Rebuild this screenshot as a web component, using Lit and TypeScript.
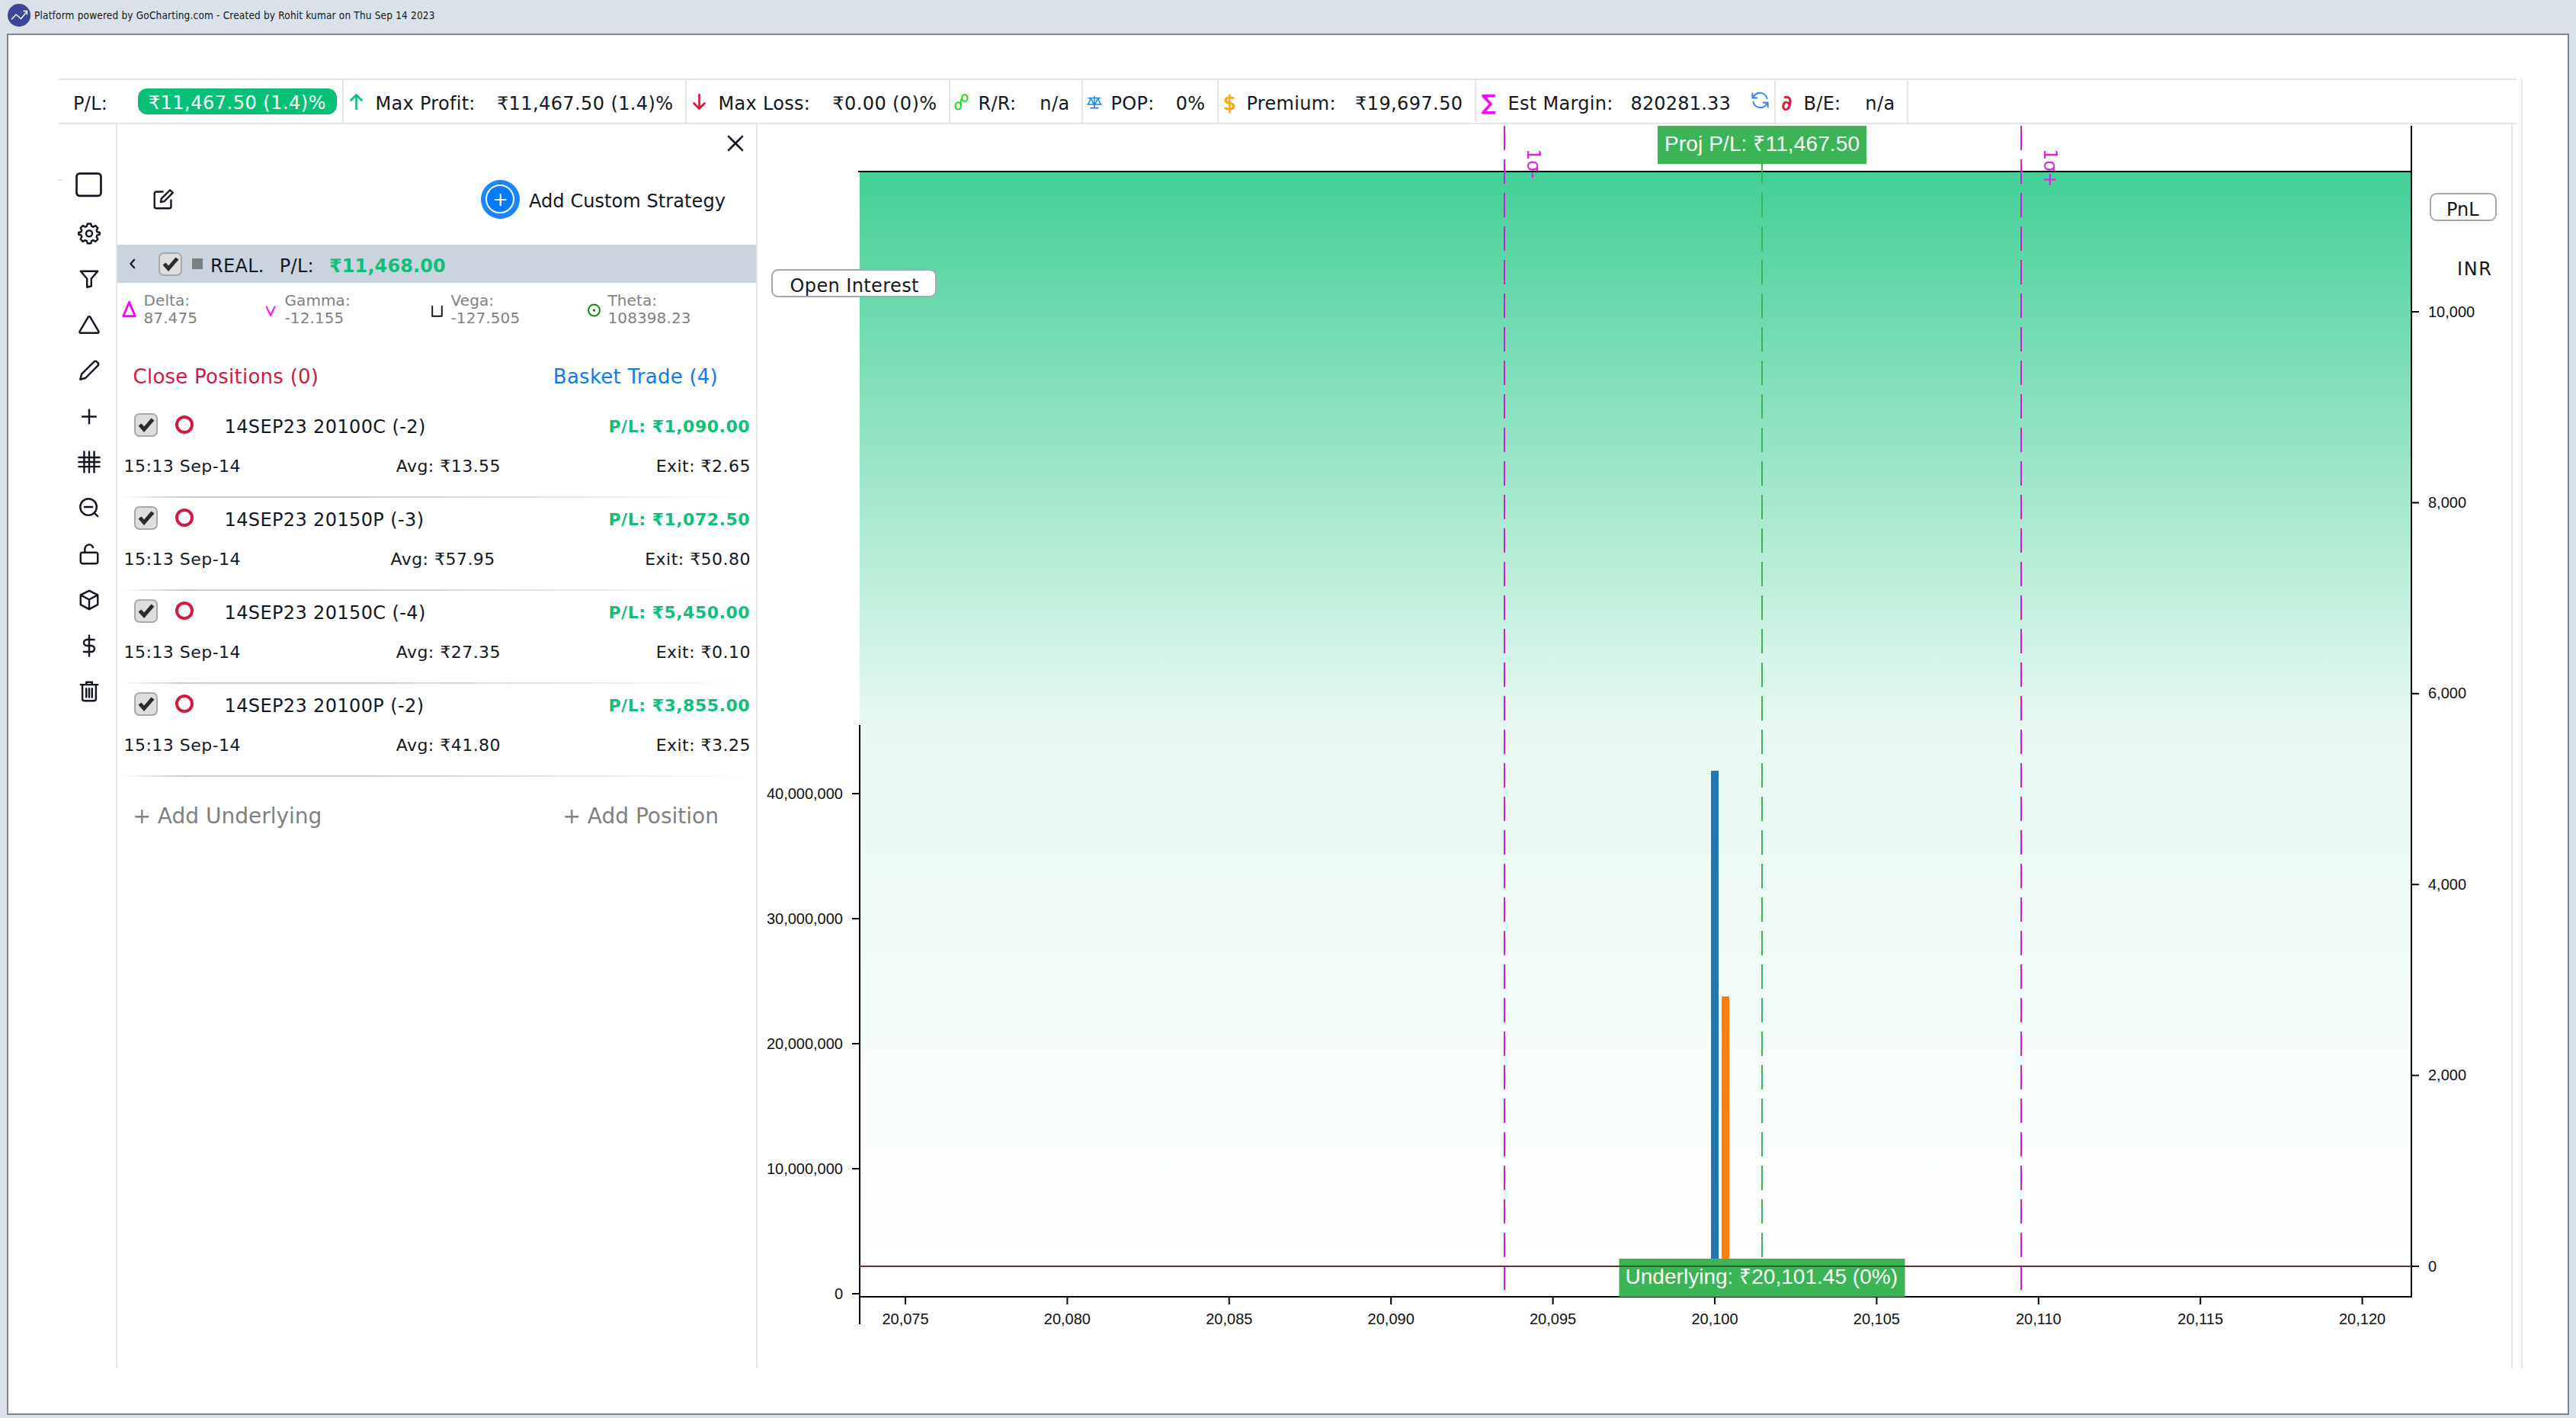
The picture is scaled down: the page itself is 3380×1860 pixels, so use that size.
import { css, html, LitElement, svg } from "lit";
import { customElement, property } from "lit/decorators.js";

// Stroke icons, all on a 32x32 grid
const icons = {
    square: svg`<rect x="0.5" y="1.5" width="31" height="28.5" rx="4" />`,
    gear: svg`
        <path d="M13.6 2.6h4.8l.9 3.5 2.3 1 3.2-1.8 3.3 3.3-1.8 3.2 1 2.3 3.4.8v2.9l-3.4.9-1 2.3 1.8 3.2-3.3 3.3-3.2-1.8-2.3 1-.9 3.4h-4.8l-.9-3.4-2.3-1-3.2 1.8-3.3-3.3 1.8-3.2-1-2.3-3.4-.9v-2.9l3.4-.8 1-2.3-1.8-3.2 3.3-3.3 3.2 1.8 2.3-1z" />
        <circle cx="16" cy="16.3" r="4.3" />`,
    filter: svg`<path d="M4 5h24l-9 10.5V26l-6 1.5v-12z" />`,
    triangle: svg`<path d="M14.6 5.2L2.8 25.1c-.6 1.2.1 2.4 1.4 2.4h23.6c1.3 0 2-1.2 1.4-2.4L17.4 5.2c-.7-1.1-2.1-1.1-2.8 0z" />`,
    pencil: svg`<path d="M3.5 28.5l1.9-7.5L22.5 4.1a3.200 3.200 0 0 1 4.500 0l.9.9a3.200 3.200 0 0 1 0 4.500L11 26.400z" />`,
    plus: svg`<path d="M16 7v19M6.5 16.5h19" />`,
    hash: svg`<path d="M9 1.5v29M16 1.5v29M23 1.5v29M1.5 9.5h29M1.5 16h29M1.5 22.5h29" />`,
    zoomOut: svg`<circle cx="15" cy="15" r="11.5" /><path d="M9.5 15h11M23.5 23.5l4.500 4.500" />`,
    lock: svg`<rect x="4" y="13.5" width="24" height="15.5" rx="2.5" /><path d="M10 13.5V9.5a6 6.500 0 0 1 11.500-3" />`,
    cube: svg`<path d="M16 3l12 6v13.5L16 29 4 22.5V9zM4 9l12 6.5L28 9M16 15.5V29" />`,
    dollar: svg`<path d="M16 1.5v29M23 7.5H12.8a4.200 4.200 0 0 0 0 8.500h6.400a4.200 4.200 0 0 1 0 8.500H8.500" />`,
    trash: svg`<path d="M4 6.5h24M12 6V3h8v3M6.5 7.5v19a2.500 2.500 0 0 0 2.500 2.500h14a2.500 2.500 0 0 0 2.500-2.500v-19M12 12v12M16 12v12M20 12v12" />`,
    edit: svg`<path d="M15 5H5.5A2.500 2.500 0 0 0 3 7.500v19A2.500 2.500 0 0 0 5.500 29h19a2.500 2.500 0 0 0 2.500-2.500V17M12 20l1-5L25.500 2.500l4 4L17 19z" />`,
    close: svg`<path d="M7 7l18 18M25 7l-18 18" />`,
    back: svg`<path d="M18.5 10l-5.5 6 5.5 6" />`,
    up: svg`<path d="M16 26V8M9 14.5l7-7 7 7" />`,
    down: svg`<path d="M16 7v18M9 18.5l7 7 7-7" />`,
    link: svg`<ellipse cx="11.2" cy="22.5" rx="4" ry="5" /><ellipse cx="20.8" cy="11" rx="4" ry="5" /><path d="M15.2 22v-7.500l1.600-2" />`,
    scales: svg`<path d="M8 11h17M16.500 8.500v17M11 25.500h11M11.500 11.500L7.500 20M11.500 11.500l4 8.500M21.500 11.500l-4 8.500M21.500 11.500l4 8.500M6.500 20.500h8.500M18 20.500h8.500" />`,
    refresh: svg`<path d="M27.5 13A12 11.500 0 0 0 6 8.500L3 11.500M3 4.500v7.500h7.500M4.500 19A12 11.500 0 0 0 26 23.500l3-3M29 27.500V20h-7.500" />`,
    delta: svg`<path d="M15 6.500L7 25.500h16z" />`,
    gamma: svg`<path d="M10 13l5.500 11.500M21 13l-5.500 11.500" />`,
    vega: svg`<path d="M9.500 12v13.500h13V12" />`,
    theta: svg`<circle cx="16" cy="17.500" r="7.700" /><circle cx="16" cy="17.500" r=".8" />`,
};

@customElement("oc-icon")
export class IconElement extends LitElement {
    @property({ type: String })
    name = "square";

    render() {
        return html`<svg viewBox="0 0 32 32">${icons[this.name]}</svg>`;
    }

    static styles = css`
        :host {
            display: block;
            flex: none;
            width: 32px;
            height: 32px;
        }

        svg {
            display: block;
            width: 100%;
            height: 100%;
            overflow: visible;
            fill: none;
            stroke: currentColor;
            stroke-width: var(--stroke, 2.6);
            stroke-linecap: round;
            stroke-linejoin: round;
        }
    `;
}

@customElement("oc-checkbox")
export class CheckboxElement extends LitElement {
    render() {
        return html`
            <svg width="31" height="31" viewBox="0 0 31 31">
                <rect x="1" y="1" width="29" height="29" rx="6" fill="#dedede" stroke="#a9a9a9" stroke-width="2" />
                <path d="M5.500 16.500l4-3 3.500 4 9.500-11 4 3L13 25z" fill="#2b2b2b" />
            </svg>
        `;
    }

    static styles = css`
        :host {
            display: block;
            flex: none;
            width: 31px;
            height: 31px;
        }

        svg {
            display: block;
        }
    `;
}

@customElement("oc-stats")
export class StatsElement extends LitElement {
    @property({ type: Array })
    stats = [
        { label: "P/L:", value: "₹11,467.50 (1.4)%", pill: true },
        { icon: "up", tone: "green", label: "Max Profit:", value: "₹11,467.50 (1.4)%" },
        { icon: "down", tone: "red", label: "Max Loss:", value: "₹0.00 (0)%" },
        { icon: "link", tone: "lime", label: "R/R:", value: "n/a", slim: true },
        { icon: "scales", tone: "blue", label: "POP:", value: "0%", slim: true },
        { glyph: "$", tone: "orange", label: "Premium:", value: "₹19,697.50", slim: true },
        { glyph: "∑", tone: "magenta", label: "Est Margin:", value: "820281.33", refresh: true },
        { glyph: "∂", tone: "red", label: "B/E:", value: "n/a", slim: true },
    ];

    renderMark(stat) {
        if (stat.icon) {
            return html`<oc-icon class="mark ${stat.slim ? "slim" : ""} ${stat.tone}" name=${stat.icon}></oc-icon>`;
        }
        if (stat.glyph) {
            return html`<span class="mark glyph ${stat.slim ? "slim" : ""} ${stat.tone}">${stat.glyph}</span>`;
        }
        return html`<span class="blank"></span>`;
    }

    render() {
        return html`
            ${this.stats.map(stat => html`
                <div class="stat ${stat.refresh ? "tight" : ""}">
                    ${this.renderMark(stat)}
                    <span class="label">${stat.label}</span>
                    <span class="value ${stat.pill ? "pill" : ""}">${stat.value}</span>
                    ${stat.refresh ? html`<oc-icon class="refresh" name="refresh"></oc-icon>` : ""}
                </div>
            `)}
        `;
    }

    static styles = css`
        :host {
            display: grid;
            grid-template-columns: 374px 450px 346px 174px 178px 338px 393px 174px;
            width: 3225px;
            height: 60px;
            box-sizing: border-box;
            border-top: 2px solid #e5e5e5;
            border-bottom: 2px solid #e5e5e5;
        }

        .stat {
            display: flex;
            align-items: center;
            box-sizing: border-box;
            padding-right: 15.5px;
            border-right: 2px solid #e5e5e5;
        }

        .tight {
            padding-right: 4px;
        }

        .stat:first-child {
            padding-right: 7px;
        }

        .label,
        .value {
            padding-top: 5px;
            letter-spacing: 0.3px;
            white-space: nowrap;
        }

        .value {
            margin-left: auto;
            letter-spacing: 0.4px;
        }

        .tight .value {
            letter-spacing: 0.2px;
        }

        .pill {
            height: 34px;
            box-sizing: border-box;
            padding: 5px 14px 0 14px;
            border-radius: 12px;
            background: #05c077;
            color: #fff;
            line-height: 29px;
            letter-spacing: 0.5px;
        }

        .blank {
            width: 19px;
        }

        .mark {
            flex: none;
            width: 33px;
            margin-right: 8.5px;
            text-align: center;
            --stroke: 2.6;
        }

        .slim {
            width: 29px;
            margin-right: 7.5px;
        }

        .mark.slim {
            --stroke: 1.7;
        }

        .mark.lime {
            --stroke: 2.2;
        }

        .glyph {
            padding-top: 4px;
            font-size: 27px;
            line-height: 28px;
            -webkit-text-stroke: 0.8px currentColor;
        }

        .refresh {
            width: 29px;
            height: 25px;
            margin: 0 0 4px 24px;
            color: #3c86e8;
        }

        .green { color: #05c077; }
        .red { color: #dc143c; }
        .lime { color: #12e212; }
        .blue { color: #1e86f0; }
        .orange { color: #ffa500; }
        .magenta { color: #f0f; }
    `;
}

@customElement("oc-positions")
export class PositionsElement extends LitElement {
    @property({ type: Array })
    positions = [
        { name: "14SEP23 20100C (-2)", pl: "₹1,090.00", avg: "₹13.55", exit: "₹2.65" },
        { name: "14SEP23 20150P (-3)", pl: "₹1,072.50", avg: "₹57.95", exit: "₹50.80" },
        { name: "14SEP23 20150C (-4)", pl: "₹5,450.00", avg: "₹27.35", exit: "₹0.10" },
        { name: "14SEP23 20100P (-2)", pl: "₹3,855.00", avg: "₹41.80", exit: "₹3.25" },
    ];

    @property({ type: Array })
    greeks = [
        { icon: "delta", label: "Delta:", value: "87.475" },
        { icon: "gamma", label: "Gamma:", value: "-12.155" },
        { icon: "vega", label: "Vega:", value: "-127.505" },
        { icon: "theta", label: "Theta:", value: "108398.23" },
    ];

    renderPosition(position) {
        return html`
            <div class="position">
                <div class="head">
                    <oc-checkbox></oc-checkbox>
                    <span class="ring"></span>
                    <span class="name">${position.name}</span>
                    <span class="pl">P/L: ${position.pl}</span>
                </div>
                <div class="detail">
                    <span>15:13 Sep-14</span>
                    <span>Avg: ${position.avg}</span>
                    <span>Exit: ${position.exit}</span>
                </div>
                <div class="divider"></div>
            </div>
        `;
    }

    render() {
        return html`
            <div class="close"><oc-icon name="close"></oc-icon></div>
            <div class="tools">
                <oc-icon name="edit"></oc-icon>
                <span class="add"><span class="add-inner">+</span></span>
                <span class="add-label">Add Custom Strategy</span>
            </div>
            <div class="strategy">
                <oc-icon name="back"></oc-icon>
                <oc-checkbox></oc-checkbox>
                <span class="swatch"></span>
                <span class="text real">REAL.</span>
                <span class="text">P/L:</span>
                <span class="text total">₹11,468.00</span>
            </div>
            <div class="greeks">
                ${this.greeks.map(greek => html`
                    <div class="greek">
                        <oc-icon class=${greek.icon} name=${greek.icon}></oc-icon>
                        <div>${greek.label}<br>${greek.value}</div>
                    </div>
                `)}
            </div>
            <div class="links">
                <span class="red">Close Positions (0)</span>
                <span class="blue">Basket Trade (4)</span>
            </div>
            ${this.positions.map(position => this.renderPosition(position))}
            <div class="footer">
                <span>+ Add Underlying</span>
                <span>+ Add Position</span>
            </div>
        `;
    }

    static styles = css`
        :host {
            display: flex;
            flex-direction: column;
            width: 840px;
            box-sizing: border-box;
            border-right: 2px solid #e5e5e5;
            white-space: nowrap;
        }

        .close {
            display: flex;
            justify-content: flex-end;
            align-items: center;
            height: 50px;
            padding-right: 11px;
        }

        .tools {
            display: flex;
            align-items: center;
            height: 96px;
            padding: 0 40px 0 45.5px;
        }

        .tools oc-icon {
            width: 29px;
            height: 29px;
        }

        .add {
            display: grid;
            place-items: center;
            width: 51px;
            height: 51px;
            margin: 0 12px 0 auto;
            border-radius: 50%;
            background: #1c86ff;
        }

        .add-inner {
            width: 34px;
            height: 34px;
            border: 2.5px solid #fff;
            border-radius: 50%;
            background: #0579ff;
            color: #fff;
            font-size: 24px;
            line-height: 37px;
            text-align: center;
        }

        .add-label {
            padding-top: 5px;
            letter-spacing: 0.08px;
        }

        .strategy {
            display: flex;
            align-items: center;
            height: 50px;
            margin-top: 12px;
            background: #cad4df;
        }

        .strategy oc-icon {
            margin: 0 20px 0 6px;
            width: 28px;
            height: 32px;
        }

        .swatch {
            width: 14px;
            height: 14px;
            margin-left: 13px;
            background: #7b7f7f;
        }

        .text {
            padding-top: 5px;
            margin-left: 20px;
            letter-spacing: 0.3px;
        }

        .real {
            margin-left: 10px;
        }

        .total {
            color: #0fbf7a;
            font-weight: 700;
            letter-spacing: 0.1px;
        }

        .greeks {
            display: grid;
            grid-template-columns: 185px 218px 206px 1fr;
            height: 91px;
            padding: 12px 0 0 2px;
            color: #808080;
            font-size: 20px;
            line-height: 22.5px;
            letter-spacing: 0.1px;
        }

        .greek {
            display: flex;
            align-items: flex-start;
        }

        .greek oc-icon {
            width: 31px;
            height: 31px;
            margin: 7px 2.5px 0 -1px;
        }

        .delta { color: #f0f; --stroke: 3; }
        .gamma { color: #f0f; --stroke: 2; }
        .vega { color: #131722; --stroke: 2; }
        .theta { color: #0a8a0a; --stroke: 2; }

        .links {
            display: flex;
            justify-content: space-between;
            margin-bottom: 18px;
            padding: 0 50px 0 20.5px;
            font-size: 26px;
            line-height: 40px;
            letter-spacing: 0.25px;
        }

        .red { color: #d2193f; }
        .blue { color: #0a7bf0; }

        .position {
            height: 122px;
        }

        .head {
            display: flex;
            align-items: center;
            height: 50px;
            padding: 0 8px 0 21.5px;
        }

        .ring {
            width: 16px;
            height: 16px;
            margin-left: 23.5px;
            border: 4px solid #d2193f;
            border-radius: 50%;
        }

        .name {
            margin-left: 40.5px;
            padding-top: 5px;
            letter-spacing: 0.38px;
        }

        .pl {
            margin-left: auto;
            padding-top: 5px;
            color: #0fbf7a;
            font-size: 22px;
            font-weight: 700;
            letter-spacing: 0.5px;
        }

        .detail {
            display: flex;
            justify-content: space-between;
            padding: 0 7px 0 8.5px;
            font-size: 22px;
            line-height: 60px;
            letter-spacing: 0.48px;
        }

        .divider {
            height: 2px;
            margin: 9px 4px 0;
            background: linear-gradient(90deg, #fff, #cacaca 10%, #cfcfcf 40%, #fff);
        }

        .footer {
            display: flex;
            justify-content: space-between;
            padding: 0 49px 0 20.5px;
            color: #808080;
            font-size: 28px;
            line-height: 102px;
        }
    `;
}

@customElement("oc-chart")
export class ChartElement extends LitElement {
    // Canvas coordinates of the plot area
    left = 1128;
    right = 3164;
    top = 225;
    zero = 1661;
    bottom = 1701;

    strikes = [20075, 20080, 20085, 20090, 20095, 20100, 20105, 20110, 20115, 20120];
    interest = [0, 10000000, 20000000, 30000000, 40000000];
    pnl = [0, 2000, 4000, 6000, 8000, 10000];

    format(n) {
        return n.toLocaleString("en-US");
    }

    renderStrike(strike) {
        const x = 1188 + (strike - 20075) * 42.48;
        return svg`
            <line x1=${x} x2=${x} y1="1702" y2="1711" />
            <text class="tick" x=${x} y="1737" text-anchor="middle">${this.format(strike)}</text>
        `;
    }

    renderInterest(value) {
        const y = 1697 - value / 10000000 * 164;
        return svg`
            <line x1="1118" x2=${this.left} y1=${y} y2=${y} />
            <text class="tick" x="1106" y=${y + 6.5} text-anchor="end">${this.format(value)}</text>
        `;
    }

    renderPnl(value) {
        const y = this.zero - value / 2000 * 250.4;
        return svg`
            <line x1=${this.right} x2="3174" y1=${y} y2=${y} />
            <text class="tick" x="3186" y=${y + 6.5}>${this.format(value)}</text>
        `;
    }

    renderSigma(x, label) {
        return svg`
            <line class="sigma" x1=${x} x2=${x} y1="165" y2="1692" />
            <text class="sigma-label" transform="translate(${x + 29.5} 195) rotate(90)">${label}</text>
        `;
    }

    render() {
        return html`
            <svg viewBox="994 163 2301 1632" width="2301" height="1632">
                <defs>
                    <linearGradient id="profit" x1="0" y1="0" x2="0" y2="1">
                        <stop offset="0" stop-color="#05c075" stop-opacity="0.75" />
                        <stop offset="0.5" stop-color="#05c075" stop-opacity="0.1" />
                        <stop offset="1" stop-color="#05c075" stop-opacity="0" />
                    </linearGradient>
                </defs>
                <rect x=${this.left} y=${this.top} width=${this.right - this.left} height=${this.zero - this.top} fill="url(#profit)" />
                <rect x="2245" y="1011" width="10" height="686" fill="#1f77b4" />
                <rect x="2259" y="1307" width="10" height="390" fill="#ff7f0e" />
                <g class="axis">
                    <line x1="1126" x2=${this.right} y1=${this.top} y2=${this.top} />
                    <line x1=${this.left} x2=${this.left} y1="951" y2="1737" />
                    <line x1=${this.right} x2=${this.right} y1="165" y2="1702" />
                    <line x1=${this.left} x2=${this.right} y1=${this.bottom} y2=${this.bottom} />
                    ${this.strikes.map(strike => this.renderStrike(strike))}
                    ${this.interest.map(value => this.renderInterest(value))}
                    ${this.pnl.map(value => this.renderPnl(value))}
                </g>
                ${this.renderSigma(1974, "1σ-")}
                ${this.renderSigma(2652, "1σ+")}
                <line class="spot" x1="2312" x2="2312" y1="165" y2="1652" />
                <rect class="badge" x="2175" y="165" width="274" height="50" />
                <text class="badge-text" x="2184" y="198" textLength="256">Proj P/L: ₹11,467.50</text>
                <rect class="badge" x="2124.5" y="1651" width="375" height="50" />
                <text class="badge-text" x="2132.5" y="1684" textLength="357.5">Underlying: ₹20,101.45 (0%)</text>
                <line class="zero" x1="1127" x2=${this.right} y1=${this.zero} y2=${this.zero} />
                <line class="zero-on-badge" x1="2124.5" x2="2499.5" y1=${this.zero} y2=${this.zero} />
                <rect class="button" x="1013" y="354" width="215" height="35" rx="8" />
                <text class="button-text" x="1036.5" y="382.5" textLength="169">Open Interest</text>
                <rect class="button" x="3189" y="254" width="86" height="35" rx="8" />
                <text class="button-text" x="3210" y="282.5">PnL</text>
                <text class="button-text" x="3224" y="360.5" textLength="45">INR</text>
            </svg>
        `;
    }

    static styles = css`
        :host {
            display: block;
            border-right: 2px solid #e5e5e5;
        }

        svg {
            display: block;
        }

        .axis line {
            stroke: #000;
            stroke-width: 2;
        }

        .tick {
            fill: #111;
            font: 20px "Liberation Sans", Arial, sans-serif;
        }

        .sigma {
            stroke: #d41bd4;
            stroke-width: 2;
            stroke-dasharray: 32 12;
        }

        .sigma-label {
            fill: #e61be6;
            font-size: 24px;
        }

        .spot {
            stroke: #3cb454;
            stroke-width: 2;
            stroke-dasharray: 32 12;
        }

        .badge {
            fill: #3ab455;
        }

        .badge-text {
            fill: #fff;
            font: 28px "Liberation Sans", Arial, sans-serif;
        }

        .zero {
            stroke: #722f37;
            stroke-width: 2;
        }

        .zero-on-badge {
            stroke: #28602f;
            stroke-width: 2;
        }

        .button {
            fill: #fff;
            stroke: #a4a9b0;
            stroke-width: 2;
        }

        .button-text {
            fill: #131722;
            font-size: 24px;
        }
    `;
}

@customElement("app-root")
export class AppRoot extends LitElement {
    tools = ["square", "gear", "filter", "triangle", "pencil", "plus", "hash", "zoomOut", "lock", "cube", "dollar", "trash"];

    render() {
        return html`
            <header class="header">
                <svg class="logo" viewBox="0 0 30 30">
                    <circle cx="15" cy="15" r="15" fill="#3b4599" />
                    <path d="M5 20.5l6-6.5 6.5 5.5 8-9.5M20.5 9.5h5v5" fill="none" stroke="#fff" stroke-width="1.4" />
                </svg>
                <span class="credit">Platform powered by GoCharting.com - Created by Rohit kumar on Thu Sep 14 2023</span>
            </header>
            <div class="frame">
                <div class="window">
                    <oc-stats></oc-stats>
                    <div class="body">
                        <nav class="rail">
                            ${this.tools.map(name => html`<div class="tool"><oc-icon name=${name}></oc-icon></div>`)}
                        </nav>
                        <oc-positions></oc-positions>
                        <oc-chart></oc-chart>
                    </div>
                </div>
            </div>
        `;
    }

    static styles = css`
        :host {
            display: flex;
            flex-direction: column;
            width: 3380px;
            height: 1860px;
            overflow: hidden;
            background: #dae1e8;
            color: #131722;
            font-family: "DejaVu Sans", Verdana, sans-serif;
            font-size: 24px;
            line-height: 28px;
        }

        .header {
            display: flex;
            align-items: center;
            gap: 5px;
            height: 40px;
            padding: 0 10px 4px;
        }

        .logo {
            width: 30px;
            height: 30px;
        }

        .credit {
            font-family: "DejaVu Sans Condensed", "DejaVu Sans", sans-serif;
            font-stretch: condensed;
            font-size: 13.5px;
            line-height: 20px;
            letter-spacing: 0.18px;
            color: #131722;
        }

        .frame {
            flex: 1;
            margin: 0 9px 4px;
            padding: 57px 0 0 66px;
            border: 2px solid #7f858b;
            background: #fff;
        }

        .window {
            display: flex;
            flex-direction: column;
            width: 3233px;
            height: 1692px;
            box-sizing: border-box;
            border-right: 2px solid #e5e5e5;
        }

        .body {
            display: flex;
            flex: 1;
        }

        .rail {
            position: relative;
            width: 77px;
            box-sizing: border-box;
            padding-top: 50px;
            border-right: 2px solid #e5e5e5;
        }

        /* resize handle on the outer edge */
        .rail::before {
            content: "";
            position: absolute;
            top: 72px;
            left: -1px;
            width: 6px;
            height: 2px;
            background: #e5e5e5;
        }

        .tool {
            display: flex;
            align-items: center;
            justify-content: center;
            height: 60.15px;
            padding-left: 4px;
        }

        .tool:first-child {
            height: 62.5px;
        }

        .tool oc-icon {
            width: 30px;
            height: 30px;
        }

        .tool:first-child oc-icon {
            width: 33px;
            height: 33px;
            margin-bottom: 3px;
        }
    `;
}
